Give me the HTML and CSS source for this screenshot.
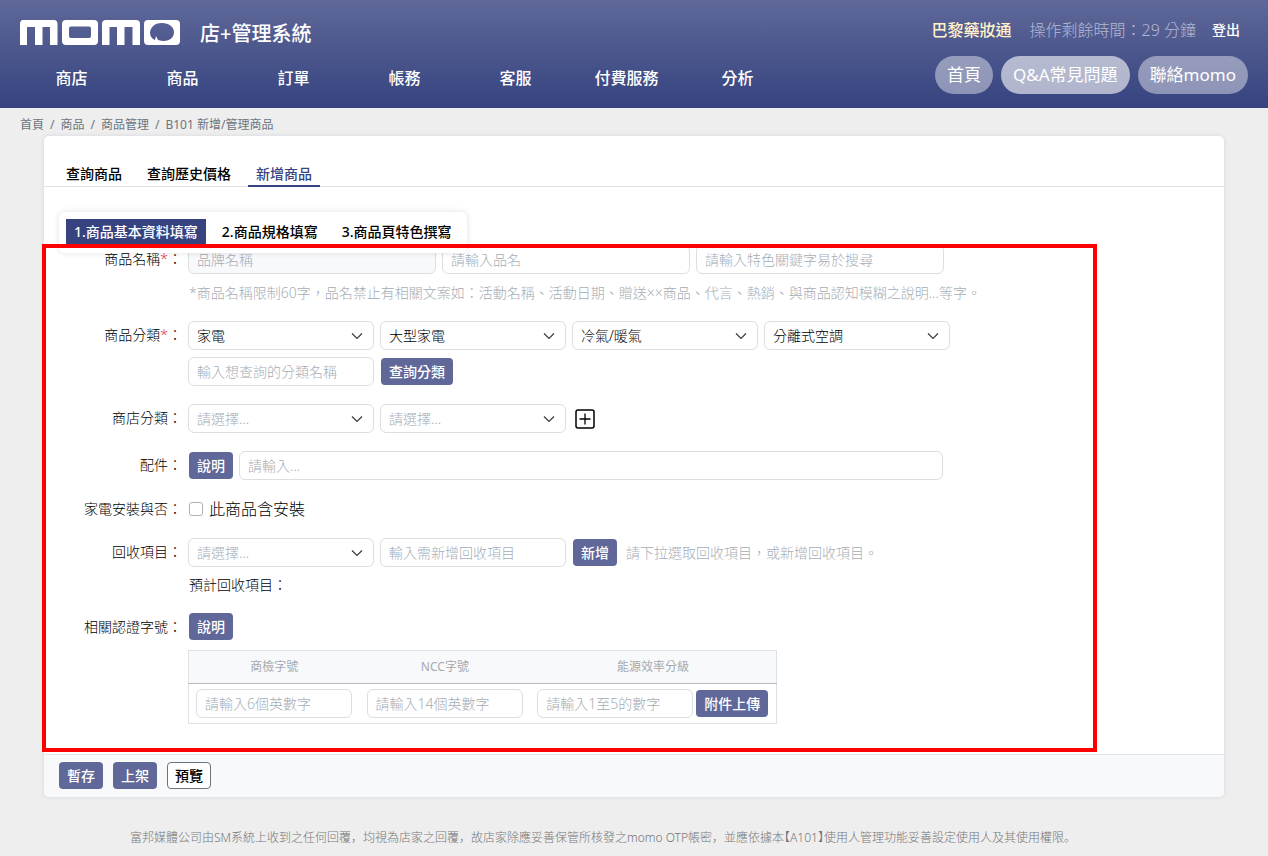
FILE: index.html
```html
<!DOCTYPE html>
<html lang="zh-Hant">
<head>
<meta charset="utf-8">
<meta name="viewport" content="width=device-width, initial-scale=1">
<title>momo 店+管理系統</title>
<link rel="stylesheet" href="styles.css">
</head>
<body>
<header class="site-header">
  <div class="header-main">
    <div class="brand">
      <svg class="logo" viewBox="0 0 161 26" role="img" aria-label="momo">
        <g fill="#fff" fill-rule="evenodd">
          <path d="M3 0H34Q37.500 0 37.500 4V25H30V7H22.500V25H15V7H7V25H0V4Q0 0 3 0Z"/>
          <path d="M46 0H74Q78 0 78 4V21Q78 25 74 25H46Q42 25 42 21V4Q42 0 46 0ZM51 6.500Q49 6.500 49 8.500V16Q49 18 51 18H69Q71 18 71 16V8.500Q71 6.500 69 6.500Z"/>
          <path d="M86 0H116Q120 0 120 4V25H112.500V7H104.500V25H97V7H89.500V25H82V4Q82 0 86 0Z"/>
          <path d="M128 0H156Q160 0 160 4V21Q160 25 156 25H128Q124 25 124 21V4Q124 0 128 0ZM142 3C134 3 130 8 130 13C130 16 132 19 135 20L136 16L138 20C147 23 154 19 154 12C154 7 149 3 142 3Z"/>
        </g>
      </svg>
      <span class="brand-name">店+管理系統</span>
    </div>
    <nav class="main-nav">
      <a href="#">商店</a><a href="#">商品</a><a href="#">訂單</a><a href="#">帳務</a><a href="#">客服</a><a href="#">付費服務</a><a href="#">分析</a>
    </nav>
  </div>
  <div class="header-side">
    <div class="account">
      <span class="shop">巴黎藥妝通</span>
      <span class="timer">操作剩餘時間：29 分鐘</span>
      <a class="logout" href="#">登出</a>
    </div>
    <div class="pills">
      <a class="pill" href="#">首頁</a>
      <a class="pill pill-active" href="#">Q&amp;A常見問題</a>
      <a class="pill" href="#">聯絡momo</a>
    </div>
  </div>
</header>

<nav class="breadcrumb" aria-label="breadcrumb">
  <a href="#">首頁</a><span>/</span><a href="#">商品</a><span>/</span><a href="#">商品管理</a><span>/</span><a href="#">B101 新增/管理商品</a>
</nav>

<main class="card">
  <nav class="tabs">
    <a class="tab" href="#">查詢商品</a>
    <a class="tab" href="#">查詢歷史價格</a>
    <a class="tab tab-active" href="#">新增商品</a>
  </nav>
  <nav class="steps">
    <a class="step step-active" href="#">1.商品基本資料填寫</a>
    <a class="step" href="#">2.商品規格填寫</a>
    <a class="step" href="#">3.商品頁特色撰寫</a>
  </nav>

  <form class="product-form">
    <div class="row">
      <label class="label" for="brand">商品名稱<span class="required">*</span>：</label>
      <div class="fields">
        <div class="line">
          <input class="control wide" id="brand" type="text" placeholder="品牌名稱" disabled>
          <input class="control wide" type="text" placeholder="請輸入品名" aria-label="品名">
          <input class="control wide" type="text" placeholder="請輸入特色關鍵字易於搜尋" aria-label="特色關鍵字">
        </div>
        <p class="hint">*商品名稱限制60字，品名禁止有相關文案如：活動名稱、活動日期、贈送××商品、代言、熱銷、與商品認知模糊之說明...等字。</p>
      </div>
    </div>
    <div class="row">
      <label class="label" for="category">商品分類<span class="required">*</span>：</label>
      <div class="fields">
        <div class="line">
          <select class="control select" id="category"><option>家電</option></select>
          <select class="control select" aria-label="第二層分類"><option>大型家電</option></select>
          <select class="control select" aria-label="第三層分類"><option>冷氣/暖氣</option></select>
          <select class="control select" aria-label="第四層分類"><option>分離式空調</option></select>
        </div>
        <div class="line">
          <input class="control" type="text" placeholder="輸入想查詢的分類名稱" aria-label="分類名稱">
          <button class="btn" type="button">查詢分類</button>
        </div>
      </div>
    </div>
    <div class="row">
      <label class="label" for="shop-category">商店分類：</label>
      <div class="fields">
        <div class="line">
          <select class="control select empty" id="shop-category"><option>請選擇...</option></select>
          <select class="control select empty" aria-label="商店子分類"><option>請選擇...</option></select>
          <button class="icon-btn" type="button" aria-label="新增商店分類">
            <svg viewBox="0 0 20 20" width="20" height="20" fill="none" stroke="#000"><rect x="1" y="1" width="18" height="18" rx="2" stroke-width="1.500"/><path d="M10 4.500V15.500M4.500 10H15.500" stroke-width="1.300"/></svg>
          </button>
        </div>
      </div>
    </div>
    <div class="row">
      <label class="label" for="accessory">配件：</label>
      <div class="fields">
        <div class="line line-full">
          <button class="btn" type="button">說明</button>
          <input class="control grow" id="accessory" type="text" placeholder="請輸入...">
        </div>
      </div>
    </div>
    <div class="row row-check">
      <span class="label">家電安裝與否：</span>
      <div class="fields">
        <div class="line">
          <input class="check" id="install" type="checkbox">
          <label class="check-label" for="install">此商品含安裝</label>
        </div>
      </div>
    </div>
    <div class="row">
      <label class="label" for="recycle">回收項目：</label>
      <div class="fields">
        <div class="line">
          <select class="control select empty" id="recycle"><option>請選擇...</option></select>
          <input class="control" type="text" placeholder="輸入需新增回收項目" aria-label="新增回收項目">
          <button class="btn" type="button">新增</button>
          <span class="inline-hint">請下拉選取回收項目，或新增回收項目。</span>
        </div>
        <p class="planned">預計回收項目：</p>
      </div>
    </div>
    <div class="row">
      <span class="label">相關認證字號：</span>
      <div class="fields">
        <div class="line">
          <button class="btn" type="button">說明</button>
        </div>
        <table class="cert">
          <thead>
            <tr><th>商檢字號</th><th>NCC字號</th><th>能源效率分級</th></tr>
          </thead>
          <tbody>
            <tr>
              <td><input class="control cell" type="text" placeholder="請輸入6個英數字" aria-label="商檢字號"></td>
              <td><input class="control cell" type="text" placeholder="請輸入14個英數字" aria-label="NCC字號"></td>
              <td><div class="upload"><input class="control cell" type="text" placeholder="請輸入1至5的數字" aria-label="能源效率分級"><button class="btn" type="button">附件上傳</button></div></td>
            </tr>
          </tbody>
        </table>
      </div>
    </div>
    <div class="highlight"></div>
  </form>

  <div class="actions">
    <button class="btn" type="button">暫存</button>
    <button class="btn" type="button">上架</button>
    <button class="btn btn-outline" type="button">預覽</button>
  </div>
</main>

<footer class="site-footer" lang="zh-Hans">富邦媒體公司由SM系統上收到之任何回覆，均視為店家之回覆，故店家除應妥善保管所核發之momo OTP帳密，並應依據本<span class="half">【</span>A101<span class="half">】</span>使用人管理功能妥善設定使用人及其使用權限。</footer>
</body>
</html>
```

FILE: styles.css
```css
* {
  box-sizing: border-box;
}

body {
  margin: 0;
  background: #eee;
  color: #000;
  font: 300 14px/20px "Noto Sans", "Noto Sans CJK TC", sans-serif;
}

a {
  color: inherit;
  text-decoration: none;
}

p {
  margin: 0;
}

input, select, button {
  font: inherit;
}

/* Header */
.site-header {
  display: flex;
  justify-content: space-between;
  height: 108px;
  padding: 20px 20px 0 16px;
  background: linear-gradient(#5f6899, #36437f);
  color: #fff;
}

.brand {
  display: flex;
  gap: 19px;
  height: 26px;
  padding-left: 4px;
}

.logo {
  width: 161px;
  height: 26px;
}

.brand-name {
  font-size: 20px;
  font-weight: 500;
  line-height: 28px;
}

.main-nav {
  display: flex;
  margin-top: 20px;
}

.main-nav a {
  width: 111px;
  text-align: center;
  font-size: 16px;
  font-weight: 500;
  line-height: 24px;
}

.header-side {
  display: flex;
  flex-direction: column;
  align-items: flex-end;
  gap: 16px;
}

.account {
  display: flex;
  gap: 16px;
  padding-right: 8px;
  font-size: 16px;
}

.shop {
  margin-right: 2px;
  color: #fff2c8;
  font-weight: 500;
}

.timer {
  color: #b4b8d0;
}

.logout {
  font-size: 14px;
  font-weight: 500;
}

.pills {
  display: flex;
  gap: 8px;
}

.pill {
  padding: 7px 12px;
  border-radius: 20px;
  background: rgba(255, 255, 255, 0.42);
  font-size: 17px;
  font-weight: 400;
  line-height: 24px;
}

.pill-active {
  background: rgba(255, 255, 255, 0.6);
}

/* Breadcrumb */
.breadcrumb {
  display: flex;
  gap: 6px;
  padding: 7px 20px 0;
  color: #6c757d;
  font-size: 12px;
  font-weight: 400;
}

/* Card */
.card {
  position: relative;
  margin: 0 43px;
  border: 1px solid #e2e4ea;
  border-radius: 6px;
  background: #fff;
  box-shadow: 0 0 4px rgba(0, 0, 0, 0.06);
}

.tabs {
  display: flex;
  gap: 9px;
  padding: 24px 14px 0;
  border-bottom: 1px solid #dee2e6;
}

.tab {
  margin-bottom: -1px;
  padding: 4px 8px 1px;
  border-bottom: 2px solid transparent;
  font-weight: 500;
}

.tab-active {
  border-color: #36437f;
  color: #36437f;
}

.steps {
  position: relative;
  display: flex;
  gap: 8px;
  width: max-content;
  margin: 25px 0 0 15px;
  padding: 7px 8px 8px 7px;
  border-radius: 6px;
  background: #fff;
  box-shadow: 0 0 6px rgba(0, 0, 0, 0.12);
  z-index: 1;
}

.step {
  padding: 3px 8px;
  font-weight: 500;
}

.step-active {
  background: #36437f;
  color: #fff;
}

/* Form */
.product-form {
  position: relative;
  display: flex;
  flex-direction: column;
  gap: 18px;
  margin-top: -8px;
  padding-bottom: 30px;
}

.highlight {
  position: absolute;
  z-index: 2;
  top: -1px;
  bottom: 2px;
  left: -2px;
  width: 1055px;
  border: 4px solid #f00;
  pointer-events: none;
}

.row {
  display: flex;
  gap: 6px;
}

.label {
  width: 138px;
  flex: none;
  padding-top: 4px;
  text-align: right;
}

.required {
  color: #dc3545;
}

.fields {
  display: flex;
  flex-direction: column;
  gap: 7px;
}

.line {
  display: flex;
  align-items: center;
  gap: 6px;
}

.control {
  width: 186px;
  height: 29px;
  padding: 0 8px;
  border: 1px solid #dcdee1;
  border-radius: 6px;
  background-color: #fff;
  color: #000;
}

.control::placeholder {
  color: #a5adb5;
  opacity: 1;
}

.control:disabled {
  background-color: #f8f9fb;
}

.wide {
  width: 248px;
}

.select {
  appearance: none;
  background-image: url("data:image/svg+xml,%3Csvg xmlns='http://www.w3.org/2000/svg' viewBox='0 0 12 12'%3E%3Cpath d='M1 3.500 6 8.500 11 3.500' fill='none' stroke='%23343a40' stroke-width='1.200'/%3E%3C/svg%3E");
  background-position: right 10px center;
  background-repeat: no-repeat;
  background-size: 12px;
}

.empty {
  color: #a5adb5;
}

.btn {
  height: 27px;
  margin-left: 1px;
  padding: 0 8px;
  border: 0;
  border-radius: 4px;
  background: #5f6899;
  color: #fff;
  font-weight: 500;
  white-space: nowrap;
}

.btn-outline {
  border: 1px solid #6c757d;
  padding: 0 7px;
  background: #fff;
  color: #000;
}

.icon-btn {
  display: flex;
  margin-left: 3px;
  padding: 0;
  border: 0;
  background: none;
}

.hint, .inline-hint {
  color: #a5adb5;
}

.hint {
  padding: 2px 0 0 1px;
}

.planned {
  padding: 1px 0 0 1px;
}

.inline-hint {
  margin-left: 3px;
}

.line-full {
  width: 755px;
}

.grow {
  flex: 1;
}

.row-check .label {
  padding-top: 1px;
}

.check {
  appearance: none;
  width: 14px;
  height: 14px;
  margin: 0 0 0 1px;
  border: 1px solid #adb1b6;
  border-radius: 3px;
  background: #fff;
}

.check-label {
  font-size: 16px;
  line-height: 22px;
}

/* Certificates */
.cert {
  width: 589px;
  margin-top: 3px;
  border: 1px solid #dee2e6;
  border-collapse: collapse;
  color: #a5a9ae;
}

.cert th {
  padding: 6px;
  border-bottom: 1px solid #b5b9bf;
  background: #f8f9fb;
  font-size: 12px;
  font-weight: 400;
}

.cert td {
  padding: 5px 7px;
}

.cell {
  display: block;
  width: 156px;
}

.upload {
  display: flex;
  align-items: center;
  gap: 2px;
}

/* Actions */
.actions {
  display: flex;
  gap: 9px;
  padding: 7px 14px 8px;
  border-top: 1px solid #e2e5ea;
  border-radius: 0 0 6px 6px;
  background: #f8f9fb;
}

.site-footer {
  padding: 30px 20px 10px 130px;
  color: #777;
  font-family: "Noto Sans", "Noto Sans CJK SC", sans-serif;
  font-size: 12px;
}

.half {
  font-feature-settings: "halt";
}
```
